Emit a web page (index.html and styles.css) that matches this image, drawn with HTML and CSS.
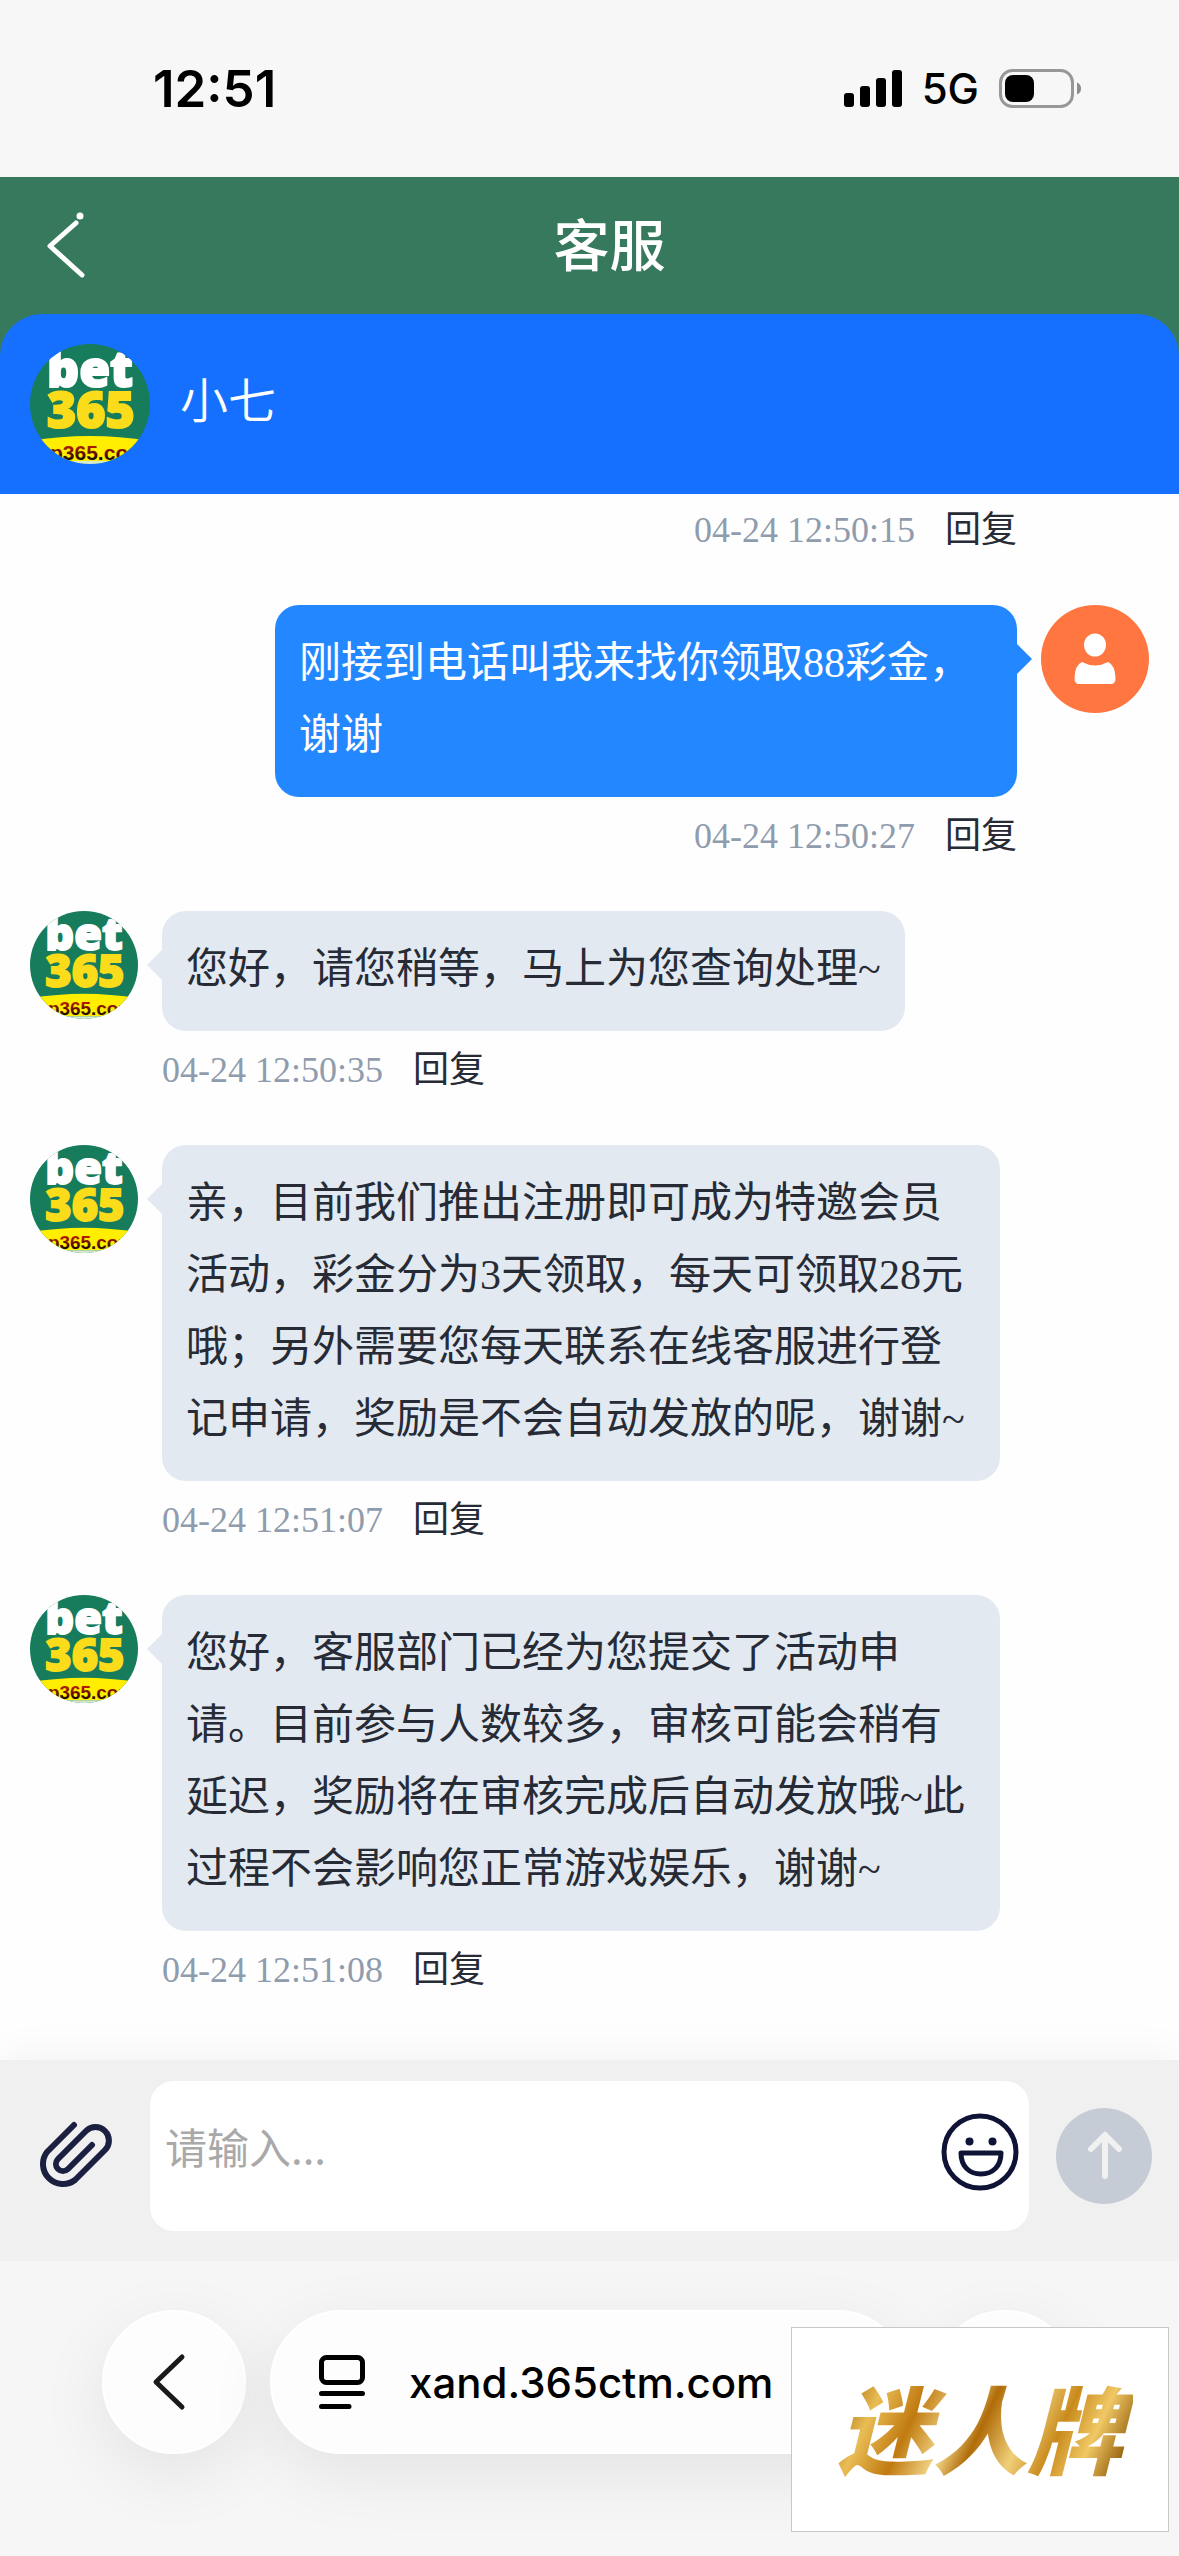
FILE: index.html
```html
<!DOCTYPE html>
<html lang="zh-CN">
<head>
<meta charset="utf-8">
<meta name="viewport" content="width=device-width, initial-scale=1">
<title>客服</title>
<link rel="stylesheet" href="styles.css">
</head>
<body>
<svg class="defs" width="0" height="0" aria-hidden="true">
  <defs>
    <linearGradient id="ink" x1="0" y1="0" x2="0" y2="1">
      <stop offset="0.2" stop-color="#b81c00"/>
      <stop offset="0.8" stop-color="#1a0a00"/>
    </linearGradient>
    <clipPath id="disc"><circle cx="60" cy="60" r="60"/></clipPath>
    <symbol id="logo" viewBox="0 0 120 120">
      <g clip-path="url(#disc)">
        <rect width="120" height="120" fill="#167c5b"/>
        <path d="M0 97Q60 87 120 97V117H0Z" fill="#ffee00"/>
        <rect y="117" width="120" height="3" fill="#d5ead0"/>
        <text class="logo-bet" x="17" y="43">bet</text>
        <text class="logo-num" x="17" y="84">365</text>
        <text class="logo-site" x="20" y="116" fill="url(#ink)">p365.com</text>
      </g>
    </symbol>
  </defs>
</svg>

<div class="screen">
  <div class="status">
    <span class="clock">12:51</span>
    <div class="status-right">
      <svg width="58" height="38" viewBox="0 0 58 38" aria-hidden="true">
        <rect x="0" y="23" width="10" height="14" rx="3"/>
        <rect x="16" y="16" width="10" height="21" rx="3"/>
        <rect x="32" y="8" width="10" height="29" rx="3"/>
        <rect x="48" y="0" width="10" height="37" rx="3"/>
      </svg>
      <span class="network">5G</span>
      <svg width="82" height="39" viewBox="0 0 82 39" aria-hidden="true">
        <rect x="1.5" y="1.5" width="72" height="36" rx="12" fill="none" stroke="#979797" stroke-width="3"/>
        <rect x="6" y="6" width="29" height="27" rx="8"/>
        <path d="M78 13.500Q82 15 82 19.500T78 25.500Z" fill="#8c8c8c"/>
      </svg>
    </div>
  </div>

  <header class="titlebar">
    <button class="back" type="button" aria-label="返回">
      <svg width="40" height="68" viewBox="0 0 40 68" aria-hidden="true">
        <path d="M31 11 5 34 37 63" fill="none" stroke="#fff" stroke-width="5" stroke-linecap="round" stroke-linejoin="round"/>
        <ellipse cx="35" cy="4" rx="3.500" ry="3.500" fill="#fff"/>
      </svg>
    </button>
    <h1 class="title">客服</h1>
  </header>

  <div class="agent-wrap">
    <div class="agent">
      <svg class="agent-avatar" role="img" aria-label="bet365"><use href="#logo"/></svg>
      <span class="agent-name">小七</span>
    </div>
  </div>

  <main class="chat">
    <div class="message out">
      <div class="content">
        <div class="meta"><time>04-24 12:50:15</time><button type="button">回复</button></div>
      </div>
      <div class="avatar-slot"></div>
    </div>
    <div class="message out">
      <div class="content">
        <p class="bubble">刚接到电话叫我来找你领取88彩金，谢谢</p>
        <div class="meta"><time>04-24 12:50:27</time><button type="button">回复</button></div>
      </div>
      <svg class="avatar" viewBox="0 0 108 108" aria-hidden="true">
        <circle cx="54" cy="54" r="54" fill="#ff7641"/>
        <ellipse cx="54" cy="40" rx="11" ry="11.500" fill="#fff"/>
        <path d="M41 57Q54 64 67 57Q74 60 74.500 73Q74.500 79 70 79H38Q33.500 79 33.500 73Q34 60 41 57Z" fill="#fff"/>
      </svg>
    </div>
    <div class="message in">
      <svg class="avatar" role="img" aria-label="bet365"><use href="#logo"/></svg>
      <div class="content">
        <p class="bubble">您好，请您稍等，马上为您查询处理~</p>
        <div class="meta"><time>04-24 12:50:35</time><button type="button">回复</button></div>
      </div>
    </div>
    <div class="message in">
      <svg class="avatar" role="img" aria-label="bet365"><use href="#logo"/></svg>
      <div class="content">
        <p class="bubble">亲，目前我们推出注册即可成为特邀会员活动，彩金分为3天领取，每天可领取28元哦；另外需要您每天联系在线客服进行登记申请，奖励是不会自动发放的呢，谢谢~</p>
        <div class="meta"><time>04-24 12:51:07</time><button type="button">回复</button></div>
      </div>
    </div>
    <div class="message in">
      <svg class="avatar" role="img" aria-label="bet365"><use href="#logo"/></svg>
      <div class="content">
        <p class="bubble">您好，客服部门已经为您提交了活动申请。目前参与人数较多，审核可能会稍有延迟，奖励将在审核完成后自动发放哦~此过程不会影响您正常游戏娱乐，谢谢~</p>
        <div class="meta"><time>04-24 12:51:08</time><button type="button">回复</button></div>
      </div>
    </div>
  </main>

  <form class="composer">
    <button class="attach" type="button" aria-label="附件">
      <svg width="76" height="70" viewBox="0 0 76 70" fill="none" stroke="#1b1f40" stroke-width="6" stroke-linecap="round" stroke-linejoin="round" aria-hidden="true">
        <path d="M38 4 11 31A20 20 0 0 0 39 59L69 29A13.400 13.400 0 0 0 50 10L22 38A7 7 0 0 0 32 48L56 24"/>
      </svg>
    </button>
    <div class="field">
      <textarea aria-label="消息" placeholder="请输入..." rows="1"></textarea>
      <button class="emoji" type="button" aria-label="表情">
        <svg width="78" height="78" viewBox="0 0 78 78" fill="none" stroke="#0f1437" stroke-width="5" stroke-linejoin="round" aria-hidden="true">
          <circle cx="39" cy="39" r="36"/>
          <circle cx="28.500" cy="28.500" r="4" fill="#0f1437" stroke="none"/>
          <circle cx="51.500" cy="28.500" r="4" fill="#0f1437" stroke="none"/>
          <path d="M20 40H60C60 53 52 61 40 61S20 53 20 40Z"/>
        </svg>
      </button>
    </div>
    <button class="send" type="submit" aria-label="发送">
      <svg width="96" height="96" viewBox="0 0 96 96" fill="none" stroke="#f1f1f1" stroke-width="6" stroke-linecap="round" stroke-linejoin="round" aria-hidden="true">
        <path d="M49 68V27M35 41 49 27 63 41"/>
      </svg>
    </button>
  </form>

  <footer class="browser">
    <button class="round" type="button" aria-label="后退">
      <svg width="44" height="58" viewBox="0 0 44 58" fill="none" stroke="#1a1a1a" stroke-width="5" stroke-linecap="round" stroke-linejoin="round" aria-hidden="true">
        <path d="M30 4 4 29 30 54"/>
      </svg>
    </button>
    <div class="address">
      <svg width="46" height="54" viewBox="0 0 46 54" fill="none" stroke="#000" stroke-width="5" stroke-linecap="round" aria-hidden="true">
        <rect x="2.500" y="2.500" width="41" height="25" rx="5"/>
        <path d="M2.500 38.500H43.500M2.500 51.500H30"/>
      </svg>
      <a class="url" href="#">xand.365ctm.com</a>
    </div>
    <button class="round" type="button" aria-label="更多"></button>
    <div class="stamp"><span>迷人牌</span></div>
  </footer>
</div>
</body>
</html>
```
FILE: styles.css
```css
* {
  box-sizing: border-box;
}

body {
  margin: 0;
  background: #fefefe;
  color: #262b35;
  font-family: "Liberation Serif", "Noto Sans CJK SC", serif;
}

button {
  border: 0;
  padding: 0;
  background: none;
  color: inherit;
  font: inherit;
}

svg {
  display: block;
  flex: none;
}

.defs {
  position: absolute;
}

.screen {
  display: flex;
  flex-direction: column;
  min-height: 100vh;
}

/* Phone status bar */
.status {
  display: flex;
  align-items: center;
  justify-content: space-between;
  height: 177px;
  padding: 0 98px 0 153px;
  background: #f7f7f7;
  color: #000;
  font-family: Inter, sans-serif;
}

.clock {
  font-size: 51px;
  font-weight: 600;
}

.status-right {
  display: flex;
  align-items: center;
  gap: 20px;
}

.network {
  font-size: 42px;
  font-weight: 500;
}

/* Page title */
.titlebar {
  display: flex;
  align-items: center;
  height: 137px;
  padding: 0 45px;
  background: #37795d;
  color: #fff;
}

.title {
  flex: 1;
  margin: 0;
  padding-bottom: 8px;
  font-family: "Noto Sans CJK SC", sans-serif;
  font-size: 56px;
  font-weight: 500;
  line-height: 80px;
  text-align: center;
}

.agent-wrap {
  background: #37795d;
}

.agent {
  display: flex;
  align-items: center;
  gap: 30px;
  height: 180px;
  padding: 0 30px;
  border-radius: 42px 42px 0 0;
  background: #1670ff;
  color: #fff;
}

.agent-avatar {
  width: 120px;
  height: 120px;
}

.agent-name {
  padding-bottom: 15px;
  font-family: "Noto Sans CJK SC", sans-serif;
  font-size: 48px;
  font-weight: 350;
  line-height: 60px;
}

.logo-bet,
.logo-num {
  font-family: "Open Sans", sans-serif;
  font-weight: 800;
  stroke-width: 2px;
}

.logo-bet {
  fill: #fff;
  stroke: #fff;
  font-size: 50px;
}

.logo-num {
  fill: #fadc1a;
  stroke: #fadc1a;
  font-size: 50px;
}

.logo-site {
  font-family: "Liberation Sans", sans-serif;
  font-size: 21px;
  font-weight: 700;
}

/* Messages */
.chat {
  display: flex;
  flex: 1;
  flex-direction: column;
  gap: 48px;
  padding: 9px 30px 62px;
}

.message {
  display: flex;
  align-items: flex-start;
  gap: 24px;
}

.in {
  padding-right: 149px;
}

.out {
  justify-content: flex-end;
  padding-left: 245px;
}

.avatar,
.avatar-slot {
  flex: none;
  width: 108px;
}

.avatar {
  height: 108px;
}

.content {
  display: flex;
  flex-direction: column;
  align-items: flex-start;
}

.out .content {
  align-items: flex-end;
}

.bubble {
  position: relative;
  margin: 0 0 12px;
  padding: 22px 24px 26px;
  border-radius: 24px;
  background: #e2e9f1;
  font-size: 42px;
  line-height: 72px;
}

.bubble::before {
  content: "";
  position: absolute;
  top: 39px;
  right: 100%;
  border: 15px solid transparent;
  border-left-width: 0;
  border-right-color: #e2e9f1;
}

.out .bubble {
  background: #2388ff;
  color: #fff;
}

.out .bubble::before {
  right: auto;
  left: 100%;
  border-width: 15px 0 15px 15px;
  border-left-color: #2388ff;
}

.meta {
  display: flex;
  align-items: center;
  gap: 30px;
  font-size: 36px;
  line-height: 54px;
}

.meta time {
  color: #8f9cad;
}

/* Message composer */
.composer {
  display: flex;
  align-items: center;
  gap: 27px;
  padding: 21px 27px 30px 36px;
  background: #f0f0f0;
  box-shadow: 0 -4px 40px rgba(0, 0, 0, 0.05);
}

.attach {
  margin-right: 11px;
}

.field {
  display: flex;
  flex: 1;
  align-items: center;
  height: 150px;
  padding: 0 10px 8px 15px;
  border-radius: 24px;
  background: #fff;
}

.field textarea {
  flex: 1;
  min-width: 0;
  height: 72px;
  padding: 0;
  border: 0;
  outline: 0;
  resize: none;
  background: none;
  font-family: "Noto Sans CJK SC", sans-serif;
  font-size: 42px;
  line-height: 60px;
}

.field textarea::placeholder {
  color: #a9a9a9;
}

.send {
  border-radius: 50%;
  background: #c5ccd5;
}

/* Browser toolbar */
.browser {
  position: relative;
  display: flex;
  gap: 24px;
  padding: 49px 102px 102px;
  background: #f6f6f6;
}

.round,
.address {
  display: flex;
  align-items: center;
  height: 144px;
  border: 2px solid #fff;
  border-radius: 72px;
  background: #fdfdfd;
  box-shadow: 0 20px 70px rgba(0, 0, 0, 0.08);
}

.round {
  justify-content: center;
  width: 144px;
}

.address {
  flex: 1;
  gap: 44px;
  padding: 0 47px;
}

.url {
  color: #000;
  font-family: Inter, sans-serif;
  font-size: 42px;
  font-weight: 500;
  text-decoration: none;
}

.stamp {
  position: absolute;
  right: 10px;
  bottom: 24px;
  display: flex;
  align-items: center;
  justify-content: center;
  width: 378px;
  height: 205px;
  border: 1px solid #c8c8c8;
  background: #fff;
}

.stamp span {
  padding: 0 10px 8px;
  background: linear-gradient(115deg, #a8700f 8%, #e9bd55 18%, #c07a10 30%, #f4d98c 42%, #b06c08 50%, #f0cf7a 62%, #c98a1c 72%, #f0c865 82%, #8c5605 94%);
  -webkit-background-clip: text;
  background-clip: text;
  color: transparent;
  font-family: "Noto Sans CJK SC", sans-serif;
  font-size: 95px;
  font-style: italic;
  font-weight: 900;
  line-height: 120px;
}
```
